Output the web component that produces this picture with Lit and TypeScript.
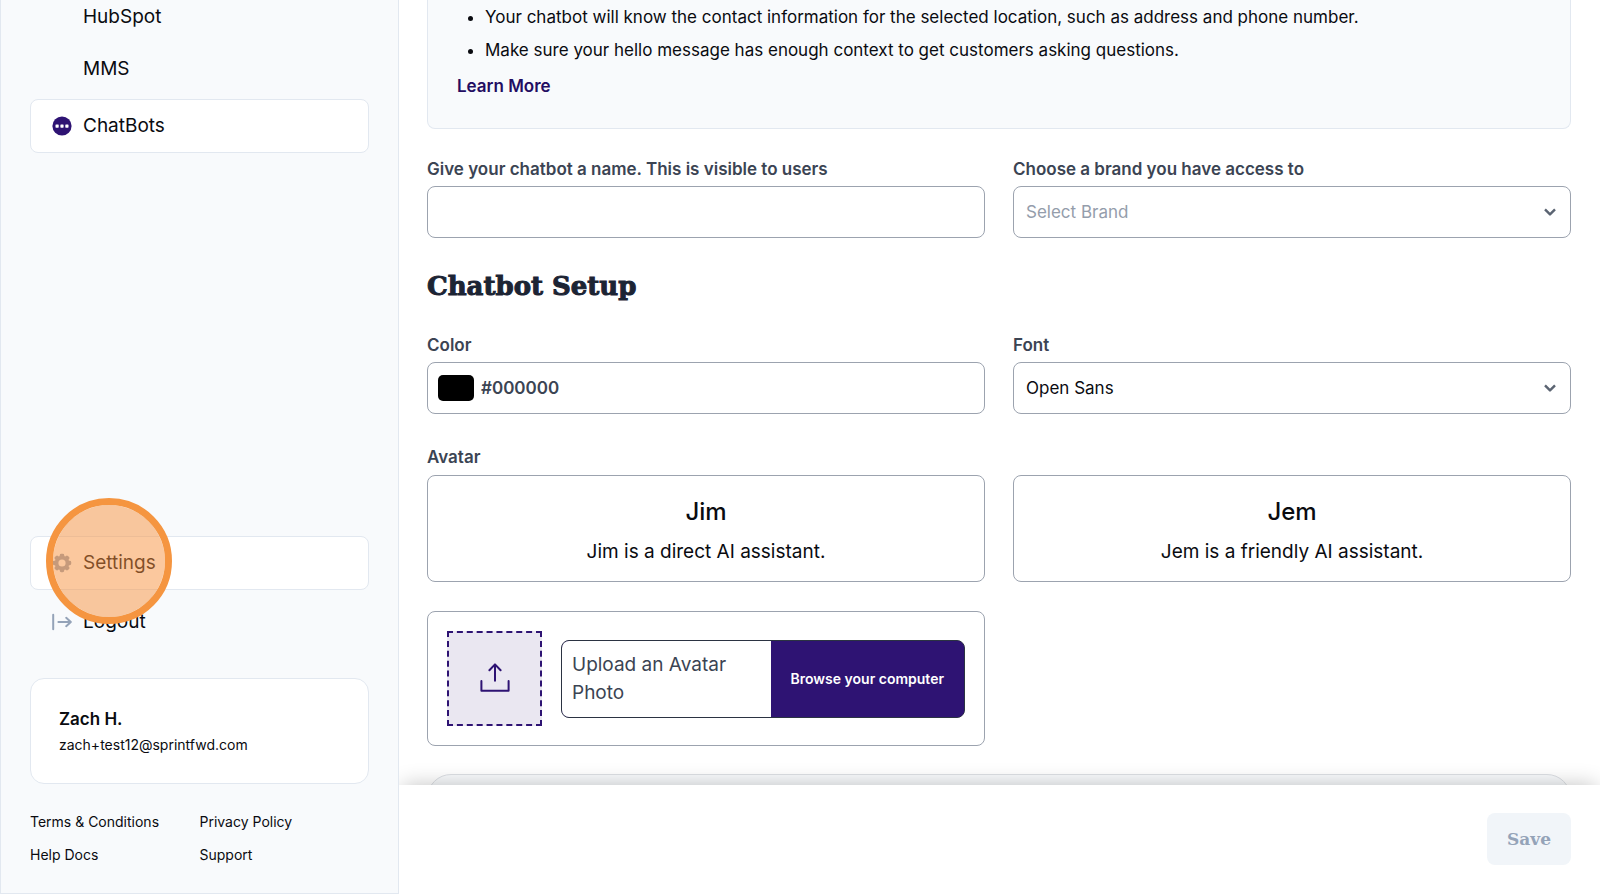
import { LitElement, html, css, svg } from "lit";
import { customElement, state } from "lit/decorators.js";

const chatIcon = svg`<svg class="icon" viewBox="0 0 20 20" aria-hidden="true">
  <circle cx="10" cy="10" r="9.6" fill="#2e1373"/>
  <rect x="3.5" y="8.5" width="3.2" height="3.2" rx=".6" fill="#fff"/>
  <rect x="8.4" y="8.5" width="3.2" height="3.2" rx=".6" fill="#fff"/>
  <rect x="13.3" y="8.5" width="3.2" height="3.2" rx=".6" fill="#fff"/>
</svg>`;

const gearIcon = svg`<svg class="icon" viewBox="0 0 20 20" aria-hidden="true">
  <g fill="#94a3b8">
    ${[0, 45, 90, 135].map(
      (a) => svg`<rect x="7.8" y=".8" width="4.4" height="18.4" rx="1.4" transform=${`rotate(${a} 10 10)`}/>`
    )}
  </g>
  <circle cx="10" cy="10" r="5.4" fill="none" stroke="#94a3b8" stroke-width="3.8"/>
  <circle cx="10" cy="10" r="3.6" fill="#fff"/>
</svg>`;

const logoutIcon = svg`<svg class="icon" viewBox="0 0 20 20" aria-hidden="true" fill="none" stroke="#94a3b8" stroke-width="2" stroke-linecap="round" stroke-linejoin="round">
  <path d="M1.2 2.8v14.4M6.4 10h12M14.2 5.8l4.6 4.2-4.6 4.2"/>
</svg>`;

const chevron = svg`<svg class="chevron" viewBox="0 0 14 14" aria-hidden="true">
  <path d="M2 4.4l5 5 5-5" fill="none" stroke="#5b6472" stroke-width="2.4" stroke-linejoin="round" stroke-linecap="butt"/>
</svg>`;

const uploadIcon = svg`<svg class="upload-icon" viewBox="0 0 32 32" aria-hidden="true" fill="none" stroke="#2e1373" stroke-width="2" stroke-linecap="round" stroke-linejoin="round">
  <path d="M16 17.8V1.8M10.4 7.2L16 1.4l5.6 5.8M2.4 18v9.8h27.2V18"/>
</svg>`;

@customElement("app-root")
export class AppRoot extends LitElement {
  @state() private color = "#000000";

  static styles = css`
    :host {
      display: flex;
      height: 100vh;
      overflow: hidden;
      background: #fff;
      color: #0a0b10;
      font-family: Inter, sans-serif;
      font-size: 17px;
      line-height: 24px;
    }
    * { box-sizing: border-box; margin: 0; }
    a { color: inherit; text-decoration: none; }
    button, input, select { font: inherit; color: inherit; }

    .sidebar {
      display: flex;
      flex-direction: column;
      flex: none;
      width: 399px;
      padding: 5px 29px 28px;
      background: #f8fafc;
      border: 1px solid #e2e8f0;
      border-top: 0;
    }
    .nav, .sub, .links { list-style: none; padding: 0; }
    .sub {
      display: grid;
      gap: 28px;
      padding: 0 53px;
      margin-bottom: 18px;
      font-size: 19px;
    }
    .nav { display: grid; gap: 5px; }
    .nav.bottom { margin-top: auto; }
    .item {
      display: flex;
      align-items: center;
      gap: 11px;
      height: 54px;
      padding: 0 21px;
      border: 1px solid transparent;
      border-radius: 8px;
      font-size: 19px;
    }
    .item.boxed { background: #fff; border-color: #e2e8f0; }
    .spot { position: relative; }
    .halo {
      position: absolute;
      z-index: 2;
      left: 16px;
      top: -38px;
      width: 126px;
      height: 126px;
      border: 7px solid #f59540;
      border-radius: 50%;
      background: rgba(247, 146, 62, 0.5);
      background-clip: padding-box;
      pointer-events: none;
    }
    .icon { flex: none; width: 20px; height: 20px; }
    .user {
      margin: 29px 0 28px;
      padding: 27px 28px 25px;
      border: 1px solid #e2e8f0;
      border-radius: 14px;
      background: #fff;
      font-size: 14px;
      line-height: 26px;
    }
    .user-name { font-size: 17px; font-weight: 600; }
    .links {
      display: grid;
      grid-template-columns: 1fr 1fr;
      row-gap: 13px;
      font-size: 14px;
      line-height: 20px;
    }

    .main { display: flex; flex-direction: column; flex: 1; min-width: 0; }
    .content { flex: 1; min-height: 0; overflow: hidden; padding: 0 29px 0 28px; }
    .tips {
      padding: 1px 29px 30px;
      background: #f8fafc;
      border: 1px solid #e2e8f0;
      border-top: 0;
      border-radius: 0 0 8px 8px;
    }
    .tips ul { padding: 0 0 0 28px; margin-bottom: 7px; line-height: 33px; }
    .learn { display: block; font-weight: 600; color: #230d62; }
    .row { display: grid; grid-template-columns: 1fr 1fr; gap: 28px; }
    .row.first { margin-top: 28px; }
    .field { display: grid; gap: 5px; }
    .label { color: #3b4453; font-weight: 600; }
    .box {
      width: 100%;
      height: 52px;
      padding: 0 12px;
      border: 1px solid #9ca3af;
      border-radius: 8px;
      background: #fff;
    }
    .pick { display: grid; align-items: center; }
    .pick > * { grid-area: 1 / 1; }
    .pick select { appearance: none; color: #0a0b10; }
    .pick select.empty { color: #949dab; }
    .chevron {
      justify-self: end;
      width: 14px;
      height: 14px;
      margin-right: 14px;
      pointer-events: none;
    }
    .heading {
      margin: 30px 0 29px;
      color: #1c2434;
      font-family: "DejaVu Serif", serif;
      font-size: 26px;
      font-weight: 700;
      line-height: 36px;
      -webkit-text-stroke: 1px #1c2434;
    }
    .color { display: flex; align-items: center; gap: 7px; padding: 0 10px; }
    .swatch {
      width: 36px;
      height: 26px;
      padding: 0;
      border: 0;
      border-radius: 5px;
      overflow: hidden;
      appearance: none;
      background: none;
    }
    .swatch::-webkit-color-swatch-wrapper { padding: 0; }
    .swatch::-webkit-color-swatch { border: 0; }
    .avatar-label { margin: 31px 0 6px; }
    .cards { row-gap: 29px; }
    .card {
      display: grid;
      gap: 7px;
      padding: 18px 20px 15px;
      border: 1px solid #9ca3af;
      border-radius: 8px;
      background: #fff;
      text-align: center;
      font-size: 19px;
      line-height: 29px;
    }
    .card-title { font-size: 24px; font-weight: 500; line-height: 36px; }
    .uploader {
      display: flex;
      align-items: center;
      gap: 19px;
      padding: 19px;
      border: 1px solid #9ca3af;
      border-radius: 8px;
    }
    .drop {
      display: grid;
      place-items: center;
      flex: none;
      width: 95px;
      height: 95px;
      border: 2px dashed #2e1373;
      background: #eae7f1;
    }
    .upload-icon { width: 32px; height: 32px; }
    .file {
      display: flex;
      flex: 1;
      border: 1px solid #2b3342;
      border-radius: 8px;
      overflow: hidden;
      background: #2e1373;
    }
    .file-text {
      flex: 1;
      padding: 10px;
      background: #fff;
      color: #3b4453;
      font-size: 19px;
      line-height: 28px;
    }
    .browse {
      flex: none;
      padding: 0 20px;
      border: 0;
      background: #2e1373;
      color: #fff;
      font-size: 14px;
      font-weight: 600;
    }
    .next {
      height: 120px;
      margin-top: 28px;
      border: 1px solid #dcdfe4;
      border-radius: 24px;
      background: #f8fafc;
    }
    .footer {
      position: relative;
      display: flex;
      justify-content: flex-end;
      padding: 28px 29px 29px;
      background: #fff;
      box-shadow: 0 -4px 20px -4px rgba(0, 0, 0, 0.24);
      clip-path: inset(-40px 0 0 0);
    }
    .save {
      height: 52px;
      padding: 0 20px;
      border: 0;
      border-radius: 8px;
      background: #f1f5f9;
      color: #94a3b8;
      font-family: "DejaVu Serif", serif;
      font-size: 17px;
      font-weight: 700;
    }
  `;

  render() {
    return html`
      <aside class="sidebar">
        <ul class="sub">
          <li><a href="#hubspot">HubSpot</a></li>
          <li><a href="#mms">MMS</a></li>
        </ul>
        <ul class="nav">
          <li><a class="item boxed" href="#chatbots">${chatIcon}<span>ChatBots</span></a></li>
        </ul>
        <ul class="nav bottom">
          <li class="spot">
            <a class="item boxed" href="#settings">${gearIcon}<span>Settings</span></a>
            <span class="halo"></span>
          </li>
          <li><a class="item" href="#logout">${logoutIcon}<span>Logout</span></a></li>
        </ul>
        <section class="user">
          <p class="user-name">Zach H.</p>
          <p>zach+test12@sprintfwd.com</p>
        </section>
        <ul class="links">
          <li><a href="#terms">Terms &amp; Conditions</a></li>
          <li><a href="#privacy">Privacy Policy</a></li>
          <li><a href="#help">Help Docs</a></li>
          <li><a href="#support">Support</a></li>
        </ul>
      </aside>
      <main class="main">
        <div class="content">
          <section class="tips">
            <ul>
              <li>Your chatbot will know the contact information for the selected location, such as address and phone number.</li>
              <li>Make sure your hello message has enough context to get customers asking questions.</li>
            </ul>
            <a class="learn" href="#learn">Learn More</a>
          </section>
          <div class="row first">
            <div class="field">
              <label class="label" for="name">Give your chatbot a name. This is visible to users</label>
              <input class="box" id="name" type="text" />
            </div>
            <div class="field">
              <label class="label" for="brand">Choose a brand you have access to</label>
              <div class="pick">
                <select class="box empty" id="brand"><option>Select Brand</option></select>
                ${chevron}
              </div>
            </div>
          </div>
          <h2 class="heading">Chatbot Setup</h2>
          <div class="row">
            <div class="field">
              <label class="label" for="color">Color</label>
              <div class="box color">
                <input class="swatch" id="color" type="color" .value=${this.color}
                  @input=${(e: Event) => (this.color = (e.target as HTMLInputElement).value)} />
                <span class="label">${this.color}</span>
              </div>
            </div>
            <div class="field">
              <label class="label" for="font">Font</label>
              <div class="pick">
                <select class="box" id="font"><option>Open Sans</option></select>
                ${chevron}
              </div>
            </div>
          </div>
          <p class="label avatar-label">Avatar</p>
          <div class="row cards">
            <button class="card" type="button">
              <span class="card-title">Jim</span><span>Jim is a direct AI assistant.</span>
            </button>
            <button class="card" type="button">
              <span class="card-title">Jem</span><span>Jem is a friendly AI assistant.</span>
            </button>
            <div class="uploader">
              <div class="drop">${uploadIcon}</div>
              <div class="file">
                <span class="file-text">Upload an Avatar Photo</span>
                <button class="browse" type="button">Browse your computer</button>
              </div>
            </div>
          </div>
          <section class="next"></section>
        </div>
        <footer class="footer"><button class="save" type="button">Save</button></footer>
      </main>
    `;
  }
}
